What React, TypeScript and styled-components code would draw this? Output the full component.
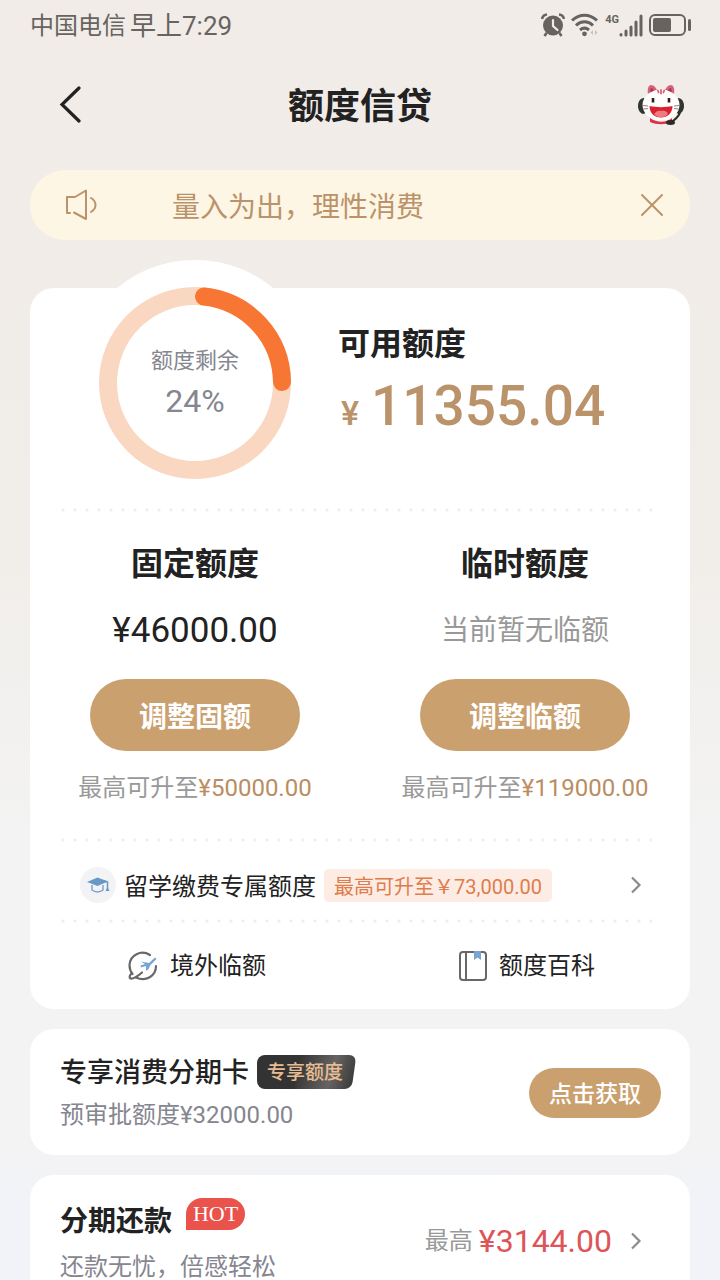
import React from "react";
import styled, { createGlobalStyle } from "styled-components";

const GlobalStyle = createGlobalStyle`
  * { box-sizing: border-box; }
  body {
    margin: 0;
    font-family: Roboto, "Noto Sans CJK SC", sans-serif;
    color: #222;
  }
  h1, h2, h3, p { margin: 0; font-weight: inherit; }
  button { border: 0; padding: 0; background: none; font: inherit; color: inherit; cursor: pointer; }
  a { color: inherit; text-decoration: none; }
  svg { display: block; flex: none; }
`;

const Screen = styled.div`
  display: flex;
  flex-direction: column;
  height: 100vh;
  overflow: hidden;
  background: linear-gradient(#f1ece7 0%, #f1ede8 38%, #f3f3f3 66%, #f3f3f4 90%, #f1f3f8 94%);
`;

const StatusBar = styled.div`
  display: flex;
  align-items: center;
  justify-content: space-between;
  height: 50px;
  padding: 0 28px 0 30px;
  color: #67635f;
  flex: none;
`;

const Carrier = styled.div`
  display: flex;
  align-items: center;
  gap: 4px;
  padding-top: 2px;
  font-size: 24px;
  line-height: 32px;
`;

const Clock = styled.span`
  font-size: 26px;
`;

const StatusIcons = styled.div`
  display: flex;
  align-items: center;
  gap: 6px;
`;

const Signal = styled.div`
  display: flex;
  align-items: flex-start;
`;

const NetworkType = styled.span`
  font-size: 11px;
  line-height: 11px;
  font-weight: 700;
`;

const Header = styled.header`
  display: flex;
  align-items: center;
  justify-content: space-between;
  height: 110px;
  padding: 0 34px 0 50px;
  flex: none;
`;

const IconButton = styled.button`
  display: grid;
  place-items: center;
  width: 50px;
  height: 50px;
`;

const BackButton = styled(IconButton)`
  width: 40px;
`;

const PageTitle = styled.h1`
  padding: 4px 6px 0 0;
  font-size: 36px;
  line-height: 44px;
  font-weight: 700;
`;

const Main = styled.main`
  flex: 1;
  min-height: 0;
  overflow-y: auto;
  padding: 10px 30px 30px;
  scrollbar-width: none;
`;

const Notice = styled.div`
  display: flex;
  align-items: center;
  height: 70px;
  padding: 0 13px 0 35px;
  border-radius: 35px;
  background: #fef6e5;
  color: #ba936b;
`;

const NoticeText = styled.p`
  flex: 1;
  padding: 5px 0 0 73px;
  font-size: 28px;
  line-height: 40px;
`;

const Cards = styled.div`
  display: flex;
  flex-direction: column;
  gap: 20px;
  margin-top: 48px;
`;

const Card = styled.section`
  border-radius: 24px;
  background: #fff;
`;

const Summary = styled.div`
  display: flex;
  gap: 20px;
  height: 220px;
  padding-left: 42px;
`;

const Gauge = styled.div`
  display: grid;
  place-items: center;
  width: 246px;
  height: 246px;
  margin-top: -28px;
  border-radius: 50%;
  background: #fff;
  flex: none;

  > * { grid-area: 1 / 1; }
`;

const GaugeLabel = styled.div`
  display: flex;
  flex-direction: column;
  align-items: center;
  padding-bottom: 4px;
  color: #85868f;
  font-size: 22px;
  line-height: 40px;
`;

const GaugeValue = styled.span`
  font-size: 32px;
`;

const Available = styled.div`
  display: flex;
  flex-direction: column;
  gap: 12px;
  padding-top: 36px;
`;

const SectionTitle = styled.h2`
  font-size: 32px;
  line-height: 40px;
  font-weight: 700;
`;

const AvailableAmount = styled.p`
  display: flex;
  align-items: baseline;
  gap: 12px;
  padding-left: 3px;
  color: #ba936b;
  font-size: 55px;
  line-height: 60px;
  font-weight: 500;
`;

const Currency = styled.span`
  font-size: 34px;
`;

const DottedLine = styled.div`
  height: 4px;
  margin: 0 38px 0 30px;
  background: radial-gradient(circle at 3px 2px, #eee 1px, transparent 2px) repeat-x 0 0 / 12px 4px;
`;

const Columns = styled.div`
  display: grid;
  grid-template-columns: 1fr 1fr;
`;

const Quota = styled.div`
  display: flex;
  flex-direction: column;
  align-items: center;
  padding: 32px 0 34px;
`;

const QuotaValue = styled.p<{ $muted?: boolean }>`
  margin: 27px 0 28px;
  font-size: ${(p) => (p.$muted ? 28 : 35)}px;
  line-height: 40px;
  color: ${(p) => (p.$muted ? "#999" : "#222")};
`;

const PillButton = styled.button<{ $small?: boolean }>`
  width: ${(p) => (p.$small ? 132 : 210)}px;
  height: ${(p) => (p.$small ? 50 : 72)}px;
  padding-bottom: ${(p) => (p.$small ? 3 : 0)}px;
  border-radius: 36px;
  background: #cba06f;
  color: #fff;
  font-size: ${(p) => (p.$small ? 23 : 28)}px;
  font-weight: ${(p) => (p.$small ? 500 : 700)};
`;

const QuotaHint = styled.p`
  margin-top: 21px;
  color: #999;
  font-size: 24px;
  line-height: 32px;
  white-space: nowrap;
`;

const Gold = styled.span`
  color: #ba8d62;
`;

const StudyRow = styled.a`
  display: flex;
  align-items: center;
  gap: 8px;
  padding: 25px 48px 16px 50px;
  font-size: 24px;
  line-height: 36px;
`;

const StudyName = styled.span`
  height: 36px;
  padding-top: 2px;
`;

const RoundIcon = styled.span`
  display: grid;
  place-items: center;
  width: 36px;
  height: 36px;
  border-radius: 50%;
  background: #f3f3f5;
`;

const StudyTag = styled.span`
  padding: 3px 10px 0;
  border-radius: 5px;
  background: #fdece4;
  color: #df7c4c;
  font-size: 20px;
  line-height: 30px;
  white-space: nowrap;
`;

const Push = styled.span`
  margin-left: auto;
`;

const LinkItem = styled.a`
  display: flex;
  align-items: center;
  justify-content: center;
  gap: 12px;
  height: 86px;
  padding-left: 4px;
  font-size: 24px;
  line-height: 32px;
`;

const Offer = styled(Card)`
  display: flex;
  align-items: center;
  justify-content: space-between;
  padding: 26px 29px 24px 30px;
`;

const OfferTitleRow = styled.div`
  display: flex;
  align-items: center;
  gap: 8px;
`;

const OfferTitle = styled.h3<{ $strong?: boolean }>`
  padding-top: ${(p) => (p.$strong ? 4 : 2)}px;
  font-size: ${(p) => (p.$strong ? 28 : 27)}px;
  line-height: ${(p) => (p.$strong ? 34 : 32)}px;
  font-weight: ${(p) => (p.$strong ? 700 : 500)};
`;

const OfferText = styled.p<{ $loose?: boolean }>`
  margin-top: ${(p) => (p.$loose ? 12 : 10)}px;
  color: #85868f;
  font-size: 24px;
  line-height: 32px;
`;

const ExclusiveTag = styled.span`
  position: relative;
  z-index: 0;
  padding: 2px 13px 0 10px;
  color: #e8bd93;
  font-size: 19px;
  line-height: 32px;
  font-weight: 500;

  &::before,
  &::after {
    content: "";
    position: absolute;
    z-index: -1;
    inset: 0 40px 0 0;
    border-radius: 8px 0 0 8px;
    background: #333;
  }

  &::after {
    inset: 0 2px 0 40px;
    border-radius: 0 7px 7px 0;
    background: linear-gradient(100deg, #333, #666462 60%, #3a3a3a);
    transform: skewX(-8deg);
  }
`;

const HotTag = styled.span`
  align-self: flex-start;
  width: 59px;
  margin: -3px 0 5px 6px;
  border-radius: 16px 16px 16px 0;
  background: #e9534b;
  color: #fff;
  font-family: "Liberation Serif", serif;
  font-size: 22px;
  line-height: 32px;
  text-align: center;
`;

const Repay = styled.a`
  display: flex;
  align-items: center;
  gap: 6px;
  padding: 0 19px 3px 0;
  color: #999;
  font-size: 24px;
  line-height: 40px;
`;

const RepayAmount = styled.strong`
  margin-right: 12px;
  color: #dd5558;
  font-size: 32px;
  font-weight: 400;
`;

function Chevron() {
  return (
    <svg width="12" height="18" viewBox="0 0 12 18" fill="none" stroke="#8b8b8b" strokeWidth="2.2">
      <path d="M2 1.5 9.5 9 2 16.5" />
    </svg>
  );
}

function AlarmIcon() {
  return (
    <svg width="24" height="24" viewBox="0 0 24 24" fill="#67635f">
      <circle cx="12" cy="12.5" r="10" />
      <path d="M1 6C1.500 3.500 3.500 1.700 6 1.500M23 6C22.500 3.500 20.500 1.700 18 1.500M5.500 20 3.500 23M18.500 20l2 3" stroke="#67635f" strokeWidth="2.600" fill="none" />
      <path d="M12 7v6l4.500 4" stroke="#f1ece7" strokeWidth="2.200" fill="none" strokeLinecap="round" />
    </svg>
  );
}

function WifiIcon() {
  return (
    <svg width="28" height="24" viewBox="0 0 28 24" fill="none" stroke="#67635f" strokeWidth="3">
      <path d="M1 7.500C8.500.5 18.500.5 26 7.500M5 12.500c5-5 12-5 17 0M9 17c3-2.500 6-2.500 9 0" />
      <circle cx="13.500" cy="20.800" r="2.400" fill="#67635f" stroke="none" />
      <path d="m22 17-2.500 2.500L22 22zM24 17v5l2.500-2.500z" fill="#c6c1bc" stroke="none" />
    </svg>
  );
}

function SignalIcon() {
  return (
    <svg width="24" height="23" viewBox="0 0 24 23" stroke="#67635f" strokeWidth="3" strokeLinecap="round">
      <path d="M2 20.500v.500M7 17v4M12 13v8M17 8v13M22 2v19" />
    </svg>
  );
}

function BatteryIcon() {
  return (
    <svg width="43" height="22" viewBox="0 0 43 22" fill="none" stroke="#67635f" strokeWidth="2">
      <rect x="1" y="1" width="35" height="20" rx="5" />
      <rect x="4" y="4" width="18" height="14" rx="2" fill="#67635f" stroke="none" />
      <path d="M40.500 6.500v9" strokeWidth="3" strokeLinecap="round" />
    </svg>
  );
}

function Mascot() {
  return (
    <svg width="48" height="42" viewBox="0 0 48 42">
      <path d="M11 10C10 4 12 1 14 1c3 0 5 3 6 5zM37 10c1-6-1-9-3-9-3 0-5 3-6 5z" fill="#d9607a" />
      <path d="M13.500 9c-.5-3 0-5 1-5s2 1.500 3 3.500zM34.500 9c.5-3 0-5-1-5s-2 1.500-3 3.500z" fill="#a83a55" />
      <path d="M7 14C3 14 1 18 1 22c0 4 2 7 5 8l3-1V15zM41 14c4 0 6 4 6 8s-2 7-5 8l-3-1V15z" fill="#303630" />
      <path d="M13 34c7 5 16 5 22 0v4c-7 3-15 3-22 0z" fill="#d8334a" />
      <ellipse cx="24" cy="21" rx="18.500" ry="15.500" fill="#fffdfc" />
      <path d="M24 6v3.500M20.800 6.500l.8 2M27.200 6.500l-.8 2" stroke="#d9607a" strokeWidth="1.800" strokeLinecap="round" />
      <path d="M6 21.500l5 .5M6.500 25l4.500-.5M42 21.500l-5 .5M41.500 25l-4.500-.5" stroke="#8a8484" strokeWidth="1" />
      <path d="M16 14v4.500M32 14v4.500" stroke="#28201f" strokeWidth="2.600" />
      <path d="M12.500 22c7 1.500 16 1.500 23 0 0 7-5 11.500-11.500 11.500S12.500 29 12.500 22z" fill="#d92131" />
      <path d="M17 30c2-3 5-4 7-3 3-1 6 0 7 3-2 2.500-4.500 3.200-7 3.200S19 32.500 17 30z" fill="#f07a80" />
      <path d="M43 29c-2 4-5 7-9 9" stroke="#282b28" strokeWidth="2" fill="none" />
      <ellipse cx="33.500" cy="38.500" rx="4.500" ry="2.500" fill="#282b28" />
    </svg>
  );
}

function GaugeRing() {
  return (
    <svg width="192" height="192" viewBox="0 0 192 192" fill="none" strokeWidth="18">
      <circle cx="96" cy="96" r="87" stroke="#fad7c0" />
      <path d="M105 9.500A87 87 0 0 1 183 95" stroke="#f87633" strokeLinecap="round" />
    </svg>
  );
}

function SpeakerIcon() {
  return (
    <svg width="34" height="32" viewBox="0 0 34 32" fill="none" stroke="#ba936b" strokeWidth="2" strokeLinecap="round" strokeLinejoin="round">
      <path d="M5 24H2V8h8l11-6.500V30L9 23.500M26 9c6 3.500 6 10.500 0 14" />
    </svg>
  );
}

function CapIcon() {
  return (
    <svg width="24" height="18" viewBox="0 0 24 18">
      <path d="M1 6 11.500 1.500 22 5.500 11.500 10z" fill="#6799c8" />
      <path d="M6 9v5c3 2.500 8 2.500 11 0V9" stroke="#7ba6d0" strokeWidth="1.500" fill="none" />
      <path d="M17 4.500 21.500 6v7" stroke="#6799c8" strokeWidth="1.500" fill="none" />
      <path d="m21.500 11 2 4h-4z" fill="#6799c8" />
    </svg>
  );
}

function OverseasIcon() {
  return (
    <svg width="30" height="30" viewBox="0 0 30 30" fill="none">
      <path d="M22 4C13-1.500 2 4 1.500 14c0 4 1 6.500 3 9M28 15c0 10-10 16-20 11.500" stroke="#686868" strokeWidth="2.200" strokeLinecap="round" />
      <path d="M14 21.500c-4 3.500-9 6.500-11.500 6-1.500-1-1-3 1-5" stroke="#686868" strokeWidth="2.200" strokeLinecap="round" />
      <path d="m13 10.500 8 1.500 6-5.500 1.500 1.500-6 6-2.500 5-2 .5v-4.500l-5 1.500-.5-2 4.500-1.500z" fill="#79a5cf" />
    </svg>
  );
}

function BookIcon() {
  return (
    <svg width="28" height="30" viewBox="0 0 28 30" fill="none" stroke="#686868" strokeWidth="2">
      <rect x="1" y="1" width="26" height="28" rx="3" />
      <path d="M7 1v28" />
      <path d="M15 0h7v9l-3.500-2.500L15 9z" fill="#79a5cf" stroke="none" />
    </svg>
  );
}

export default function App() {
  return (
    <>
      <GlobalStyle />
      <Screen>
        <StatusBar>
          <Carrier>
            中国电信<Clock>早上7:29</Clock>
          </Carrier>
          <StatusIcons>
            <AlarmIcon />
            <WifiIcon />
            <Signal>
              <NetworkType>4G</NetworkType>
              <SignalIcon />
            </Signal>
            <BatteryIcon />
          </StatusIcons>
        </StatusBar>
        <Header>
          <BackButton aria-label="返回">
            <svg width="22" height="38" viewBox="0 0 22 38" fill="none" stroke="#222" strokeWidth="3.200" strokeLinecap="round">
              <path d="M20 2 3 18.500 20 35" />
            </svg>
          </BackButton>
          <PageTitle>额度信贷</PageTitle>
          <IconButton aria-label="客服">
            <Mascot />
          </IconButton>
        </Header>
        <Main>
          <Notice>
            <SpeakerIcon />
            <NoticeText>量入为出，理性消费</NoticeText>
            <IconButton aria-label="关闭">
              <svg width="24" height="24" viewBox="0 0 24 24" stroke="#ba936b" strokeWidth="2" strokeLinecap="round">
                <path d="m2 2 20 20M22 2 2 22" />
              </svg>
            </IconButton>
          </Notice>
          <Cards>
            <Card>
              <Summary>
                <Gauge>
                  <GaugeRing />
                  <GaugeLabel>
                    额度剩余
                    <GaugeValue>24%</GaugeValue>
                  </GaugeLabel>
                </Gauge>
                <Available>
                  <SectionTitle>可用额度</SectionTitle>
                  <AvailableAmount>
                    <Currency>¥</Currency>11355.04
                  </AvailableAmount>
                </Available>
              </Summary>
              <DottedLine />
              <Columns>
                <Quota>
                  <SectionTitle>固定额度</SectionTitle>
                  <QuotaValue>¥46000.00</QuotaValue>
                  <PillButton>调整固额</PillButton>
                  <QuotaHint>
                    最高可升至<Gold>¥50000.00</Gold>
                  </QuotaHint>
                </Quota>
                <Quota>
                  <SectionTitle>临时额度</SectionTitle>
                  <QuotaValue $muted>当前暂无临额</QuotaValue>
                  <PillButton>调整临额</PillButton>
                  <QuotaHint>
                    最高可升至<Gold>¥119000.00</Gold>
                  </QuotaHint>
                </Quota>
              </Columns>
              <DottedLine />
              <StudyRow href="#study">
                <RoundIcon>
                  <CapIcon />
                </RoundIcon>
                <StudyName>留学缴费专属额度</StudyName>
                <StudyTag>最高可升至￥73,000.00</StudyTag>
                <Push>
                  <Chevron />
                </Push>
              </StudyRow>
              <DottedLine />
              <Columns>
                <LinkItem href="#overseas">
                  <OverseasIcon />
                  境外临额
                </LinkItem>
                <LinkItem href="#wiki">
                  <BookIcon />
                  额度百科
                </LinkItem>
              </Columns>
            </Card>
            <Offer>
              <div>
                <OfferTitleRow>
                  <OfferTitle>专享消费分期卡</OfferTitle>
                  <ExclusiveTag>专享额度</ExclusiveTag>
                </OfferTitleRow>
                <OfferText>预审批额度¥32000.00</OfferText>
              </div>
              <PillButton $small>点击获取</PillButton>
            </Offer>
            <Offer>
              <div>
                <OfferTitleRow>
                  <OfferTitle $strong>分期还款</OfferTitle>
                  <HotTag>HOT</HotTag>
                </OfferTitleRow>
                <OfferText $loose>还款无忧，倍感轻松</OfferText>
              </div>
              <Repay href="#repay">
                最高
                <RepayAmount>¥3144.00</RepayAmount>
                <Chevron />
              </Repay>
            </Offer>
          </Cards>
        </Main>
      </Screen>
    </>
  );
}
